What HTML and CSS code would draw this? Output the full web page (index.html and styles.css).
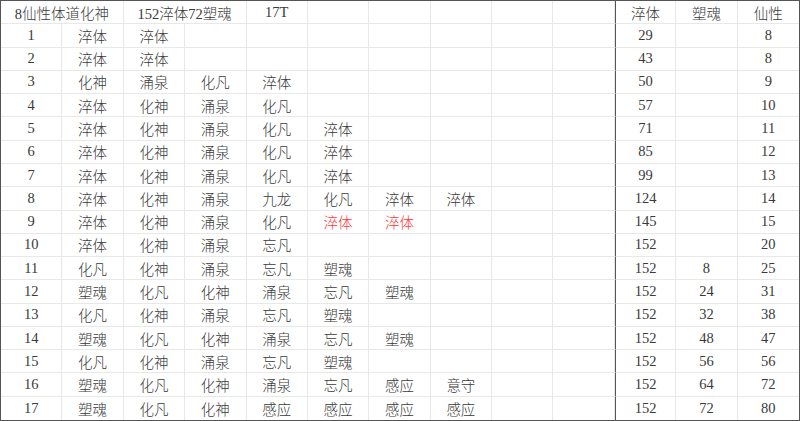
FILE: index.html
```html
<!DOCTYPE html>
<html lang="zh-CN">
<head>
<meta charset="utf-8">
<link rel="stylesheet" href="styles.css">
</head>
<body>
<div class="sheet">
  <div class="c span2">8仙性体道化神</div><div class="c span2">152淬体72塑魂</div><div class="c">17T</div><div class="c"></div><div class="c"></div><div class="c"></div><div class="c"></div><div class="c"></div><div class="c sep">淬体</div><div class="c">塑魂</div><div class="c last">仙性</div>

  <div class="c">1</div><div class="c">淬体</div><div class="c">淬体</div><div class="c"></div><div class="c"></div><div class="c"></div><div class="c"></div><div class="c"></div><div class="c"></div><div class="c"></div><div class="c sep">29</div><div class="c"></div><div class="c last">8</div>

  <div class="c">2</div><div class="c">淬体</div><div class="c">淬体</div><div class="c"></div><div class="c"></div><div class="c"></div><div class="c"></div><div class="c"></div><div class="c"></div><div class="c"></div><div class="c sep">43</div><div class="c"></div><div class="c last">8</div>

  <div class="c">3</div><div class="c">化神</div><div class="c">涌泉</div><div class="c">化凡</div><div class="c">淬体</div><div class="c"></div><div class="c"></div><div class="c"></div><div class="c"></div><div class="c"></div><div class="c sep">50</div><div class="c"></div><div class="c last">9</div>

  <div class="c">4</div><div class="c">淬体</div><div class="c">化神</div><div class="c">涌泉</div><div class="c">化凡</div><div class="c"></div><div class="c"></div><div class="c"></div><div class="c"></div><div class="c"></div><div class="c sep">57</div><div class="c"></div><div class="c last">10</div>

  <div class="c">5</div><div class="c">淬体</div><div class="c">化神</div><div class="c">涌泉</div><div class="c">化凡</div><div class="c">淬体</div><div class="c"></div><div class="c"></div><div class="c"></div><div class="c"></div><div class="c sep">71</div><div class="c"></div><div class="c last">11</div>

  <div class="c">6</div><div class="c">淬体</div><div class="c">化神</div><div class="c">涌泉</div><div class="c">化凡</div><div class="c">淬体</div><div class="c"></div><div class="c"></div><div class="c"></div><div class="c"></div><div class="c sep">85</div><div class="c"></div><div class="c last">12</div>

  <div class="c">7</div><div class="c">淬体</div><div class="c">化神</div><div class="c">涌泉</div><div class="c">化凡</div><div class="c">淬体</div><div class="c"></div><div class="c"></div><div class="c"></div><div class="c"></div><div class="c sep">99</div><div class="c"></div><div class="c last">13</div>

  <div class="c">8</div><div class="c">淬体</div><div class="c">化神</div><div class="c">涌泉</div><div class="c">九龙</div><div class="c">化凡</div><div class="c">淬体</div><div class="c">淬体</div><div class="c"></div><div class="c"></div><div class="c sep">124</div><div class="c"></div><div class="c last">14</div>

  <div class="c">9</div><div class="c">淬体</div><div class="c">化神</div><div class="c">涌泉</div><div class="c">化凡</div><div class="c red">淬体</div><div class="c red">淬体</div><div class="c"></div><div class="c"></div><div class="c"></div><div class="c sep">145</div><div class="c"></div><div class="c last">15</div>

  <div class="c">10</div><div class="c">淬体</div><div class="c">化神</div><div class="c">涌泉</div><div class="c">忘凡</div><div class="c"></div><div class="c"></div><div class="c"></div><div class="c"></div><div class="c"></div><div class="c sep">152</div><div class="c"></div><div class="c last">20</div>

  <div class="c">11</div><div class="c">化凡</div><div class="c">化神</div><div class="c">涌泉</div><div class="c">忘凡</div><div class="c">塑魂</div><div class="c"></div><div class="c"></div><div class="c"></div><div class="c"></div><div class="c sep">152</div><div class="c">8</div><div class="c last">25</div>

  <div class="c">12</div><div class="c">塑魂</div><div class="c">化凡</div><div class="c">化神</div><div class="c">涌泉</div><div class="c">忘凡</div><div class="c">塑魂</div><div class="c"></div><div class="c"></div><div class="c"></div><div class="c sep">152</div><div class="c">24</div><div class="c last">31</div>

  <div class="c">13</div><div class="c">化凡</div><div class="c">化神</div><div class="c">涌泉</div><div class="c">忘凡</div><div class="c">塑魂</div><div class="c"></div><div class="c"></div><div class="c"></div><div class="c"></div><div class="c sep">152</div><div class="c">32</div><div class="c last">38</div>

  <div class="c">14</div><div class="c">塑魂</div><div class="c">化凡</div><div class="c">化神</div><div class="c">涌泉</div><div class="c">忘凡</div><div class="c">塑魂</div><div class="c"></div><div class="c"></div><div class="c"></div><div class="c sep">152</div><div class="c">48</div><div class="c last">47</div>

  <div class="c">15</div><div class="c">化凡</div><div class="c">化神</div><div class="c">涌泉</div><div class="c">忘凡</div><div class="c">塑魂</div><div class="c"></div><div class="c"></div><div class="c"></div><div class="c"></div><div class="c sep">152</div><div class="c">56</div><div class="c last">56</div>

  <div class="c">16</div><div class="c">塑魂</div><div class="c">化凡</div><div class="c">化神</div><div class="c">涌泉</div><div class="c">忘凡</div><div class="c">感应</div><div class="c">意守</div><div class="c"></div><div class="c"></div><div class="c sep">152</div><div class="c">64</div><div class="c last">72</div>

  <div class="c b">17</div><div class="c b">塑魂</div><div class="c b">化凡</div><div class="c b">化神</div><div class="c b">感应</div><div class="c b">感应</div><div class="c b">感应</div><div class="c b">感应</div><div class="c b"></div><div class="c b"></div><div class="c b sep">152</div><div class="c b">72</div><div class="c b last">80</div>
</div>
</body>
</html>
```

FILE: styles.css
```css
html, body {
  margin: 0;
  padding: 0;
  background: #ffffff;
}

.sheet {
  box-sizing: border-box;
  width: 800px;
  height: 421px;
  border: 1px solid #555555;
  display: grid;
  grid-template-columns: repeat(13, 1fr);
  grid-template-rows: repeat(18, 1fr);
  font-family: "Liberation Serif", "Noto Sans CJK SC", serif;
  font-size: 14.5px;
  font-weight: 300;
  color: #3a3a3a;
  background: #ffffff;
}

.c {
  display: flex;
  align-items: center;
  justify-content: center;
  border-right: 1px solid #e8e8e8;
  border-bottom: 1px solid #e8e8e8;
  white-space: nowrap;
  overflow: hidden;
  min-width: 0;
}

.span2 {
  grid-column: span 2;
}

.sep {
  border-left: 1px solid #555555;
}

.last {
  border-right: none;
}

.b {
  border-bottom: none;
}

.red {
  color: #ff3b3b;
}
```
